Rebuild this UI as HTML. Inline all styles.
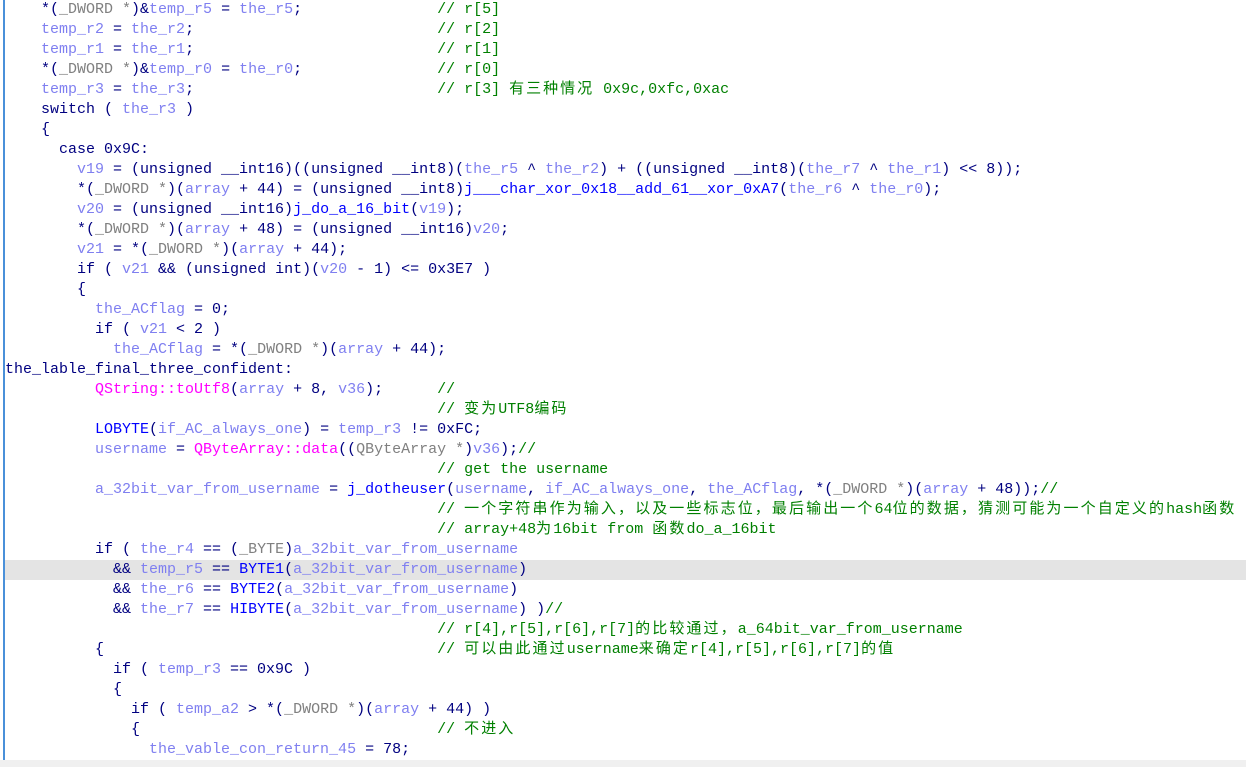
<!DOCTYPE html>
<html><head><meta charset="utf-8"><style>
body{margin:0;width:1246px;height:767px;overflow:hidden;background:#fff;position:relative}
#bar{position:absolute;left:3px;top:0;width:2px;height:767px;background:#4a90d9}
#bot{position:absolute;left:0;top:760px;width:1246px;height:7px;background:#f0f0f0}
#hl{position:absolute;left:5px;top:560px;width:1241px;height:20px;background:#e4e4e4}
pre{position:absolute;left:5px;top:0;margin:0;font:15px/20px "Liberation Mono","Noto Sans CJK SC",monospace;color:#000080;white-space:pre}
.v{color:#7f7ff0}.g{color:#808080}.f{color:#0000ff}.c{color:#008000}.m{color:#ff00ff}
.z{letter-spacing:2.1px}.z3{letter-spacing:2px}
</style></head><body>
<div id="hl"></div><div id="bar"></div><div id="bot"></div>
<pre>    *(<span class="g">_DWORD *</span>)&amp;<span class="v">temp_r5</span> = <span class="v">the_r5</span>;               <span class="c">// r[5]</span>
    <span class="v">temp_r2</span> = <span class="v">the_r2</span>;                           <span class="c">// r[2]</span>
    <span class="v">temp_r1</span> = <span class="v">the_r1</span>;                           <span class="c">// r[1]</span>
    *(<span class="g">_DWORD *</span>)&amp;<span class="v">temp_r0</span> = <span class="v">the_r0</span>;               <span class="c">// r[0]</span>
    <span class="v">temp_r3</span> = <span class="v">the_r3</span>;                           <span class="c">// r[3] <span class="z3">有三种情况</span> 0x9c,0xfc,0xac</span>
    switch ( <span class="v">the_r3</span> )
    {
      case 0x9C:
        <span class="v">v19</span> = (unsigned __int16)((unsigned __int8)(<span class="v">the_r5</span> ^ <span class="v">the_r2</span>) + ((unsigned __int8)(<span class="v">the_r7</span> ^ <span class="v">the_r1</span>) &lt;&lt; 8));
        *(<span class="g">_DWORD *</span>)(<span class="v">array</span> + 44) = (unsigned __int8)<span class="f">j___char_xor_0x18__add_61__xor_0xA7</span>(<span class="v">the_r6</span> ^ <span class="v">the_r0</span>);
        <span class="v">v20</span> = (unsigned __int16)<span class="f">j_do_a_16_bit</span>(<span class="v">v19</span>);
        *(<span class="g">_DWORD *</span>)(<span class="v">array</span> + 48) = (unsigned __int16)<span class="v">v20</span>;
        <span class="v">v21</span> = *(<span class="g">_DWORD *</span>)(<span class="v">array</span> + 44);
        if ( <span class="v">v21</span> &amp;&amp; (unsigned int)(<span class="v">v20</span> - 1) &lt;= 0x3E7 )
        {
          <span class="v">the_ACflag</span> = 0;
          if ( <span class="v">v21</span> &lt; 2 )
            <span class="v">the_ACflag</span> = *(<span class="g">_DWORD *</span>)(<span class="v">array</span> + 44);
the_lable_final_three_confident:
          <span class="m">QString::toUtf8</span>(<span class="v">array</span> + 8, <span class="v">v36</span>);      <span class="c">//</span>
                                                <span class="c">// <span class="z">变为</span>UTF8<span class="z">编码</span></span>
          <span class="f">LOBYTE</span>(<span class="v">if_AC_always_one</span>) = <span class="v">temp_r3</span> != 0xFC;
          <span class="v">username</span> = <span class="m">QByteArray::data</span>((<span class="g">QByteArray *</span>)<span class="v">v36</span>);<span class="c">//</span>
                                                <span class="c">// get the username</span>
          <span class="v">a_32bit_var_from_username</span> = <span class="f">j_dotheuser</span>(<span class="v">username</span>, <span class="v">if_AC_always_one</span>, <span class="v">the_ACflag</span>, *(<span class="g">_DWORD *</span>)(<span class="v">array</span> + 48));<span class="c">//</span>
                                                <span class="c">// <span class="z">一个字符串作为输入，以及一些标志位，最后输出一个</span>64<span class="z">位的数据，猜测可能为一个自定义的</span>hash<span class="z">函数</span></span>
                                                <span class="c">// array+48<span class="z">为</span>16bit from <span class="z">函数</span>do_a_16bit</span>
          if ( <span class="v">the_r4</span> == (<span class="g">_BYTE</span>)<span class="v">a_32bit_var_from_username</span>
            &amp;&amp; <span class="v">temp_r5</span> == <span class="f">BYTE1</span>(<span class="v">a_32bit_var_from_username</span>)
            &amp;&amp; <span class="v">the_r6</span> == <span class="f">BYTE2</span>(<span class="v">a_32bit_var_from_username</span>)
            &amp;&amp; <span class="v">the_r7</span> == <span class="f">HIBYTE</span>(<span class="v">a_32bit_var_from_username</span>) )<span class="c">//</span>
                                                <span class="c">// r[4],r[5],r[6],r[7]<span class="z">的比较通过，</span>a_64bit_var_from_username</span>
          {                                     <span class="c">// <span class="z">可以由此通过</span>username<span class="z">来确定</span>r[4],r[5],r[6],r[7]<span class="z">的值</span></span>
            if ( <span class="v">temp_r3</span> == 0x9C )
            {
              if ( <span class="v">temp_a2</span> &gt; *(<span class="g">_DWORD *</span>)(<span class="v">array</span> + 44) )
              {                                 <span class="c">// <span class="z">不进入</span></span>
                <span class="v">the_vable_con_return_45</span> = 78;</pre>
</body></html>
